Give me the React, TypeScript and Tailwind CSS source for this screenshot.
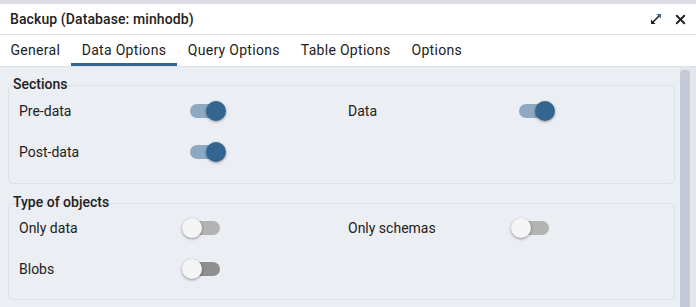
import { X } from 'lucide-react';

type ToggleProps = { on: boolean; dark?: boolean };

function Toggle({ on, dark }: ToggleProps) {
  return (
    <div className="relative w-[30px] h-[24px] flex items-center">
      <div
        className={
          on
            ? 'w-[30px] h-[14px] rounded-full bg-[#8ea9c1]'
            : dark
            ? 'w-[30px] h-[14px] rounded-full bg-[#8f8f8f]'
            : 'w-[30px] h-[14px] rounded-full bg-[#b3b3b3]'
        }
      />
      <div
        className={
          on
            ? 'absolute left-[16px] top-[2px] w-[20px] h-[20px] rounded-full bg-[#326690] shadow-[0_1px_3px_rgba(0,0,0,0.35)]'
            : 'absolute left-[-8px] top-[2px] w-[20px] h-[20px] rounded-full bg-[#f5f5f5] shadow-[0_1px_3px_rgba(0,0,0,0.4)]'
        }
      />
    </div>
  );
}

function Row({ label, on, dark }: { label: string; on: boolean; dark?: boolean }) {
  return (
    <div className="flex items-center h-[24px]">
      <span className="w-[171px] shrink-0">{label}</span>
      <Toggle on={on} dark={dark} />
    </div>
  );
}

function ExpandIcon() {
  return (
    <svg width="14" height="14" viewBox="0 0 14 14" fill="none">
      <path d="M3 11 L11 3" stroke="#222" strokeWidth="1.6" />
      <path d="M7.5 2 H12 V6.5 Z" fill="#326690" />
      <path d="M2 7.5 V12 H6.5 Z" fill="#222" />
    </svg>
  );
}

export default function App() {
  const tabs = ['General', 'Data Options', 'Query Options', 'Table Options', 'Options'];
  const active = 1;

  return (
    <div className="w-[696px] h-[307px] overflow-hidden bg-[#dcdee3] pt-[4px] font-['Roboto',sans-serif] text-[14px] text-[#222]">
      <div className="h-[303px] flex flex-col bg-white">
        <div className="h-[31px] flex items-center justify-between pl-[10px] pr-[8px] border-b border-[#dde0e6]">
          <span className="font-medium text-[#222] tracking-[0.1px]">Backup (Database: minhodb)</span>
          <div className="flex items-center gap-[10px]">
            <ExpandIcon />
            <X size={15} strokeWidth={3.2} className="text-[#222]" />
          </div>
        </div>
        <div className="h-[32px] flex items-stretch border-b border-[#dde0e6] tracking-[0.3px]">
          {tabs.map((t, i) => (
            <div
              key={t}
              className={
                i === active
                  ? 'px-[11px] flex items-center border-b-[3px] border-[#326690] pt-[3px] text-[#222]'
                  : 'px-[10.5px] flex items-center text-[#222]'
              }
            >
              {t}
            </div>
          ))}
        </div>
        <div className="flex-1 flex bg-[#ebeef3]">
          <div className="flex-1 pl-[8px] pr-[5px] pt-[8px] flex flex-col gap-[2px]">
            <div>
              <div className="pl-[5px] font-medium leading-[18px] -mb-[8px] relative z-10">Sections</div>
              <div className="border border-[#dde0e6] rounded-[5px] pt-[13px] pb-[19px] pl-[10px] flex">
                <div className="w-[329px] flex flex-col gap-[17px]">
                  <Row label="Pre-data" on />
                  <Row label="Post-data" on />
                </div>
                <div className="flex flex-col">
                  <Row label="Data" on />
                </div>
              </div>
            </div>
            <div className="mt-[7px]">
              <div className="pl-[5px] font-medium leading-[18px] -mb-[8px] relative z-10">Type of objects</div>
              <div className="border border-[#dde0e6] rounded-[5px] pt-[12px] pb-[18px] pl-[10px] flex">
                <div className="w-[329px] flex flex-col gap-[17px]">
                  <Row label="Only data" on={false} />
                  <Row label="Blobs" on={false} dark />
                </div>
                <div className="flex flex-col">
                  <Row label="Only schemas" on={false} />
                </div>
              </div>
            </div>
          </div>
          <div className="w-[16px] pt-[3px] pr-[6px] bg-[#e3e6ec]">
            <div className="w-[10px] h-full rounded-t-[4px] bg-[#c4cad6]" />
          </div>
        </div>
      </div>
    </div>
  );
}
